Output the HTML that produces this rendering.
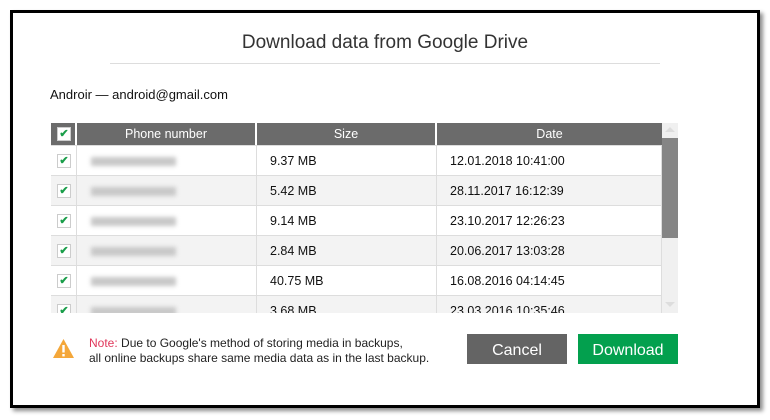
<!DOCTYPE html><html><head><style>
body{margin:0;width:770px;height:420px;background:#fff;font-family:"Liberation Sans",sans-serif;position:relative;overflow:hidden}
.win{position:absolute;left:10px;top:10px;width:744px;height:392px;border:3px solid #000;background:#fff;box-shadow:3px 3px 4px rgba(0,0,0,.45)}
.a{position:absolute}
.title{left:0;width:770px;top:32px;text-align:center;font-size:19px;color:#333}
.line{left:110px;width:550px;top:63px;height:1px;background:#ddd}
.acc{left:50px;top:87px;font-size:13px;color:#111}
.tbl{left:51px;top:123px;width:611px;height:190px;overflow:hidden}
.row{position:absolute;left:0;width:611px;height:29px;border-bottom:1px solid #ddd;font-size:12.5px;color:#111}
.c{position:absolute;top:0;height:100%;line-height:30px;border-right:1px solid #ddd;box-sizing:border-box}
.hd{background:#6b6b6b;color:#fff;height:22px}
.hd .c{line-height:23px;text-align:center;border-right:2px solid #fff;font-size:12.5px}
.cb{position:absolute;left:6px;top:8px;width:12px;height:12px;border:1px solid #ccc;background:#fff;color:#1a9e4a;font-size:11px;line-height:12px;text-align:center;font-weight:bold}
.blur{display:inline-block;margin-left:14px;width:85px;height:9px;background:#c8c8c8;filter:blur(2px);vertical-align:middle}
.btn{top:334px;width:100px;height:30px;color:#fff;font-size:16px;text-align:center;line-height:33px}
</style></head><body>
<div class="win"></div>
<div class="a title">Download data from Google Drive</div>
<div class="a line"></div>
<div class="a acc">Androir — android@gmail.com</div>
<div class="a tbl">
<div class="row hd" style="top:0"><div class="c" style="left:0;width:26px"><div class="cb" style="top:4px">✔</div></div><div class="c" style="left:26px;width:180px">Phone number</div><div class="c" style="left:206px;width:180px">Size</div><div class="c" style="left:386px;width:225px;border-right:0">Date</div></div>
<div class="row" style="top:23px;background:#fff"><div class="c" style="left:0;width:26px"><div class="cb">✔</div></div><div class="c" style="left:26px;width:180px"><span class="blur"></span></div><div class="c" style="left:206px;width:180px;padding-left:13px">9.37 MB</div><div class="c" style="left:386px;width:225px;padding-left:13px">12.01.2018 10:41:00</div></div>
<div class="row" style="top:53px;background:#f3f3f3"><div class="c" style="left:0;width:26px"><div class="cb">✔</div></div><div class="c" style="left:26px;width:180px"><span class="blur"></span></div><div class="c" style="left:206px;width:180px;padding-left:13px">5.42 MB</div><div class="c" style="left:386px;width:225px;padding-left:13px">28.11.2017 16:12:39</div></div>
<div class="row" style="top:83px;background:#fff"><div class="c" style="left:0;width:26px"><div class="cb">✔</div></div><div class="c" style="left:26px;width:180px"><span class="blur"></span></div><div class="c" style="left:206px;width:180px;padding-left:13px">9.14 MB</div><div class="c" style="left:386px;width:225px;padding-left:13px">23.10.2017 12:26:23</div></div>
<div class="row" style="top:113px;background:#f3f3f3"><div class="c" style="left:0;width:26px"><div class="cb">✔</div></div><div class="c" style="left:26px;width:180px"><span class="blur"></span></div><div class="c" style="left:206px;width:180px;padding-left:13px">2.84 MB</div><div class="c" style="left:386px;width:225px;padding-left:13px">20.06.2017 13:03:28</div></div>
<div class="row" style="top:143px;background:#fff"><div class="c" style="left:0;width:26px"><div class="cb">✔</div></div><div class="c" style="left:26px;width:180px"><span class="blur"></span></div><div class="c" style="left:206px;width:180px;padding-left:13px">40.75 MB</div><div class="c" style="left:386px;width:225px;padding-left:13px">16.08.2016 04:14:45</div></div>
<div class="row" style="top:173px;background:#f3f3f3"><div class="c" style="left:0;width:26px"><div class="cb">✔</div></div><div class="c" style="left:26px;width:180px"><span class="blur"></span></div><div class="c" style="left:206px;width:180px;padding-left:13px">3.68 MB</div><div class="c" style="left:386px;width:225px;padding-left:13px">23.03.2016 10:35:46</div></div>
</div>
<div class="a" style="left:662px;top:123px;width:16px;height:190px;background:#f0f0f0"></div>
<div class="a" style="left:662px;top:138px;width:16px;height:100px;background:#858585"></div>
<div class="a" style="left:665px;top:127px;width:0;height:0;border:5px solid transparent;border-bottom-color:#ddd;border-top:0"></div>
<div class="a" style="left:665px;top:302px;width:0;height:0;border:5px solid transparent;border-top-color:#ddd;border-bottom:0"></div>
<svg class="a" style="left:52px;top:338px" width="23" height="21" viewBox="0 0 23 21"><path d="M11.5 1 L22 20 L1 20 Z" fill="#f4a73a"/><rect x="10.3" y="7" width="2.4" height="7.5" fill="#fff"/><rect x="10.3" y="16" width="2.4" height="2.4" fill="#fff"/></svg>
<div class="a" style="left:89px;top:336px;font-size:12px;line-height:15px;color:#222"><span style="color:#e0365a">Note:</span> Due to Google's method of storing media in backups,<br>all online backups share same media data as in the last backup.</div>
<div class="a btn" style="left:467px;background:#646464">Cancel</div>
<div class="a btn" style="left:578px;background:#03a04e">Download</div>
</body></html>
